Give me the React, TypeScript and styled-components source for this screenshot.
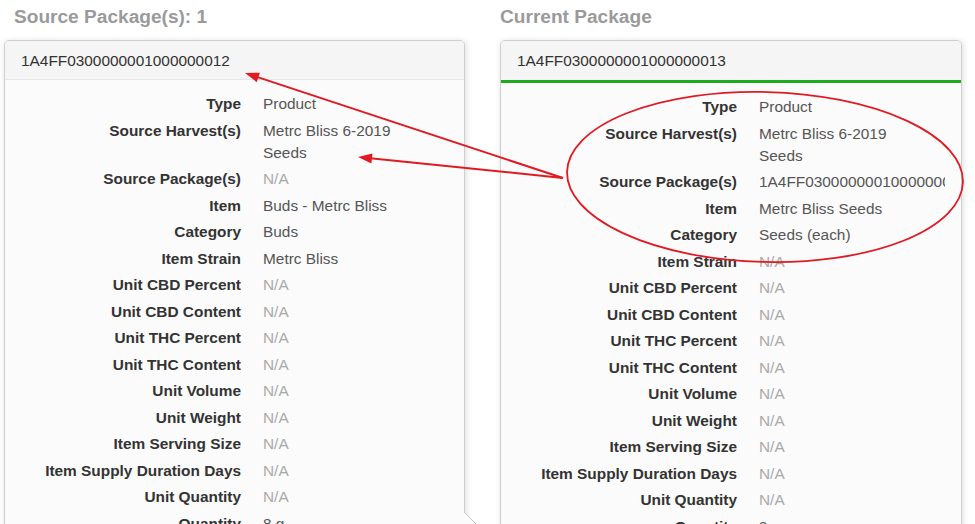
import React from "react";
import styled, { createGlobalStyle, css } from "styled-components";

const GlobalStyle = createGlobalStyle`
  html, body { margin: 0; padding: 0; background: #ffffff; }
  body { overflow: hidden; font-family: "Liberation Sans", Arial, Helvetica, sans-serif; }
  * { box-sizing: border-box; }
`;

const Page = styled.div`
  position: relative;
  width: 975px;
  height: 524px;
  overflow: hidden;
  display: flex;
  gap: 35px;
  padding: 6px 0 0 4px;
`;

const Column = styled.section<{ $width: number }>`
  width: ${(p) => p.$width}px;
  flex-shrink: 0;
  display: flex;
  flex-direction: column;
  gap: 12px;
`;

const Heading = styled.h2<{ $indent: number }>`
  margin: 0;
  padding-left: ${(p) => p.$indent}px;
  font-size: 19.1px;
  line-height: 22px;
  font-weight: bold;
  color: #9a9a9a;
`;

const Panel = styled.div<{ $notch?: boolean }>`
  position: relative;
  border: 1px solid #cfcfcf;
  border-radius: 5px;
  background: #fbfbfb;
  box-shadow: 1px 1px 6px rgba(0, 0, 0, 0.14);
  ${(p) =>
    p.$notch &&
    css`
      &::after {
        content: "";
        position: absolute;
        top: 471px;
        right: -14px;
        width: 14px;
        height: 14px;
        background: linear-gradient(
          to top right,
          #fbfbfb calc(50% - 0.7px),
          #c6c6c6 calc(50% - 0.7px),
          #c6c6c6 calc(50% + 0.7px),
          transparent calc(50% + 0.7px)
        );
      }
    `}
`;

const PanelHeader = styled.div<{ $current?: boolean }>`
  height: ${(p) => (p.$current ? 42 : 39)}px;
  line-height: 39px;
  padding: 0 16px;
  background: #f5f5f5;
  border-radius: 4px 4px 0 0;
  border-bottom: ${(p) => (p.$current ? "3px solid #1eaa1e" : "1px solid #e6e6e6")};
  font-size: 15.4px;
  color: #333333;
  white-space: nowrap;
`;

const PanelBody = styled.div`
  padding: 13px 16px 14px 0;
`;

const FieldList = styled.dl`
  margin: 0;
  display: grid;
  grid-template-columns: 236px 160px;
  column-gap: 22px;
  row-gap: 4.5px;
  overflow: hidden;
  font-size: 15.4px;
  line-height: 22px;
`;

const Label = styled.dt`
  text-align: right;
  font-weight: bold;
  color: #333333;
  white-space: nowrap;
`;

const Value = styled.dd<{ $muted?: boolean }>`
  margin: 0;
  color: ${(p) => (p.$muted ? "#a9a9a9" : "#555555")};
`;

const Annotations = styled.svg`
  position: absolute;
  left: 0;
  top: 0;
  pointer-events: none;
`;

type Field = [string, string];

const NA = "N/A";

const sourceFields: Field[] = [
  ["Type", "Product"],
  ["Source Harvest(s)", "Metrc Bliss 6-2019 Seeds"],
  ["Source Package(s)", NA],
  ["Item", "Buds - Metrc Bliss"],
  ["Category", "Buds"],
  ["Item Strain", "Metrc Bliss"],
  ["Unit CBD Percent", NA],
  ["Unit CBD Content", NA],
  ["Unit THC Percent", NA],
  ["Unit THC Content", NA],
  ["Unit Volume", NA],
  ["Unit Weight", NA],
  ["Item Serving Size", NA],
  ["Item Supply Duration Days", NA],
  ["Unit Quantity", NA],
  ["Quantity", "8 g"],
];

const currentFields: Field[] = [
  ["Type", "Product"],
  ["Source Harvest(s)", "Metrc Bliss 6-2019 Seeds"],
  ["Source Package(s)", "1A4FF0300000001000000012"],
  ["Item", "Metrc Bliss Seeds"],
  ["Category", "Seeds (each)"],
  ["Item Strain", NA],
  ["Unit CBD Percent", NA],
  ["Unit CBD Content", NA],
  ["Unit THC Percent", NA],
  ["Unit THC Content", NA],
  ["Unit Volume", NA],
  ["Unit Weight", NA],
  ["Item Serving Size", NA],
  ["Item Supply Duration Days", NA],
  ["Unit Quantity", NA],
  ["Quantity", "9 ea"],
];

function Fields({ items }: { items: Field[] }) {
  return (
    <FieldList>
      {items.map(([label, value]) => (
        <React.Fragment key={label}>
          <Label>{label}</Label>
          <Value $muted={value === NA}>{value}</Value>
        </React.Fragment>
      ))}
    </FieldList>
  );
}

const RED = "#e01a22";

function arrowHead(x1: number, y1: number, x2: number, y2: number, len = 14, half = 5) {
  const dx = x2 - x1;
  const dy = y2 - y1;
  const d = Math.hypot(dx, dy);
  const ux = dx / d;
  const uy = dy / d;
  const bx = x2 - ux * len;
  const by = y2 - uy * len;
  const px = -uy;
  const py = ux;
  return `${x2},${y2} ${bx + px * half},${by + py * half} ${bx - px * half},${by - py * half}`;
}

function Arrow({ x1, y1, x2, y2 }: { x1: number; y1: number; x2: number; y2: number }) {
  const d = Math.hypot(x2 - x1, y2 - y1);
  const ex = x2 - ((x2 - x1) / d) * 10;
  const ey = y2 - ((y2 - y1) / d) * 10;
  return (
    <g>
      <line x1={x1} y1={y1} x2={ex} y2={ey} stroke={RED} strokeWidth={2} />
      <polygon points={arrowHead(x1, y1, x2, y2)} fill={RED} />
    </g>
  );
}

export default function App() {
  return (
    <>
      <GlobalStyle />
      <Page>
        <Column $width={461}>
          <Heading $indent={10}>Source Package(s): 1</Heading>
          <Panel $notch>
            <PanelHeader>1A4FF0300000001000000012</PanelHeader>
            <PanelBody>
              <Fields items={sourceFields} />
            </PanelBody>
          </Panel>
        </Column>
        <Column $width={462}>
          <Heading $indent={0}>Current Package</Heading>
          <Panel>
            <PanelHeader $current>1A4FF0300000001000000013</PanelHeader>
            <PanelBody>
              <Fields items={currentFields} />
            </PanelBody>
          </Panel>
        </Column>
        <Annotations width={975} height={524} viewBox="0 0 975 524">
          <ellipse
            cx={765}
            cy={177}
            rx={198}
            ry={85}
            transform="rotate(1.5 765 177)"
            fill="none"
            stroke={RED}
            strokeWidth={1.8}
          />
          <Arrow x1={563} y1={178} x2={245} y2={73} />
          <Arrow x1={563} y1={178} x2={358} y2={157} />
        </Annotations>
      </Page>
    </>
  );
}
